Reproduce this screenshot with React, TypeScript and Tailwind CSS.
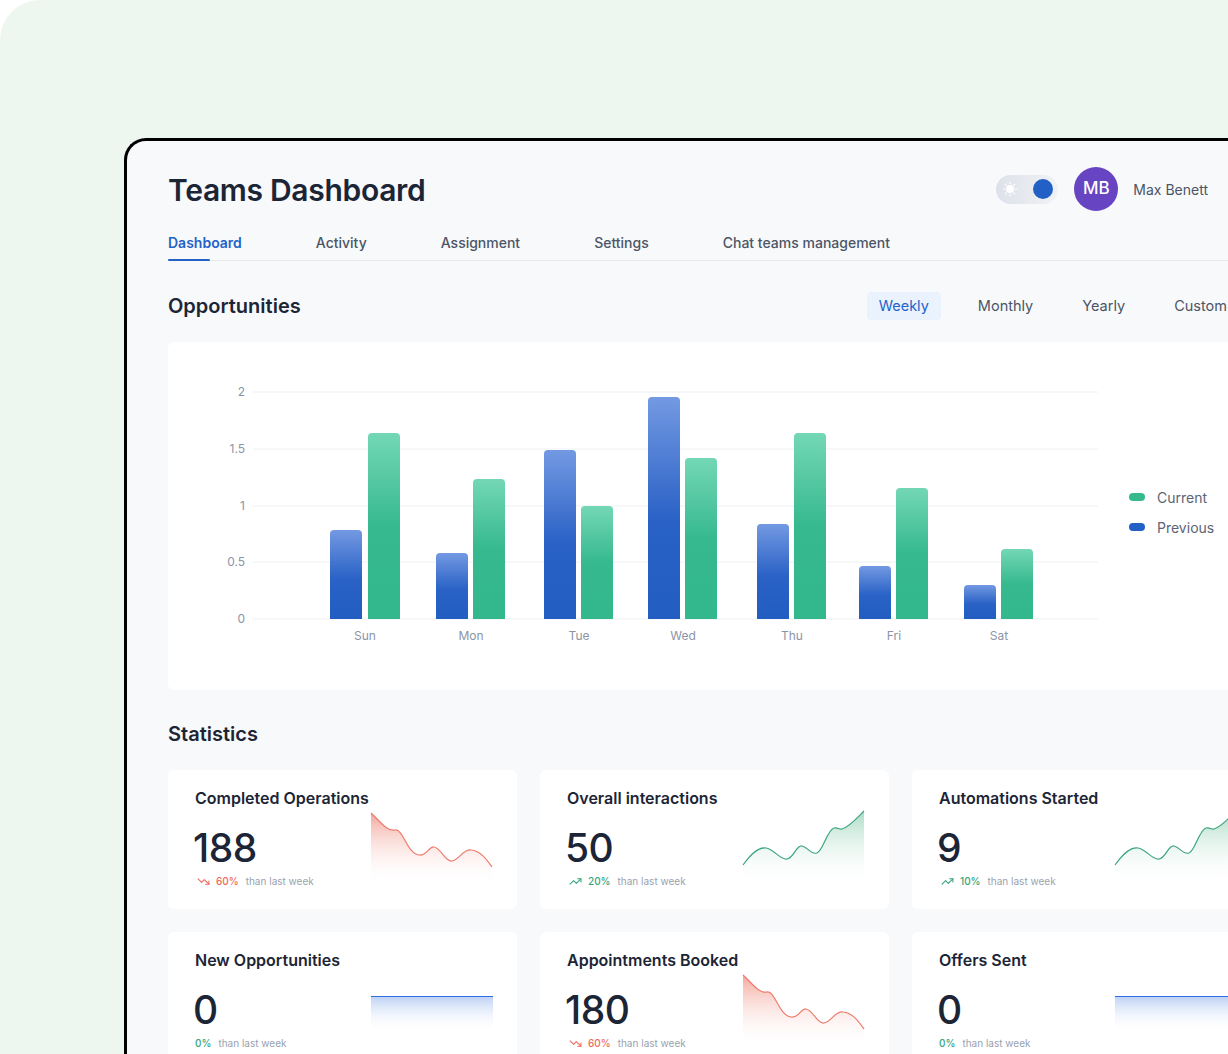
import React from "react";
import { TrendingDown, TrendingUp } from "lucide-react";

const barPath = (x: number, y: number, w: number, h: number, r: number) =>
  `M${x},${y + h} V${y + r} Q${x},${y} ${x + r},${y} H${x + w - r} Q${x + w},${y} ${x + w},${y + r} V${y + h} Z`;

const days = [
  { d: "Sun", px: 162, pt: 188, cx: 200, ct: 91 },
  { d: "Mon", px: 268, pt: 211, cx: 305, ct: 137 },
  { d: "Tue", px: 376, pt: 108, cx: 413, ct: 164 },
  { d: "Wed", px: 480, pt: 55, cx: 517, ct: 116 },
  { d: "Thu", px: 589, pt: 182, cx: 626, ct: 91 },
  { d: "Fri", px: 691, pt: 224, cx: 728, ct: 146 },
  { d: "Sat", px: 796, pt: 243, cx: 833, ct: 207 },
];

const BASE = 277;

function Chart() {
  const grid = [
    { y: 50, l: "2" },
    { y: 107, l: "1.5" },
    { y: 164, l: "1" },
    { y: 220, l: "0.5" },
    { y: 277, l: "0" },
  ];
  return (
    <svg width="961" height="348" viewBox="0 0 961 348" className="shrink-0">
      <defs>
        <linearGradient id="gPrev" x1="0" y1="0" x2="0" y2="1">
          <stop offset="0" stopColor="#7399e2" />
          <stop offset="0.55" stopColor="#2a62c6" />
          <stop offset="1" stopColor="#225dc2" />
        </linearGradient>
        <linearGradient id="gCur" x1="0" y1="0" x2="0" y2="1">
          <stop offset="0" stopColor="#74d7b5" />
          <stop offset="0.5" stopColor="#36b98f" />
          <stop offset="1" stopColor="#33b78c" />
        </linearGradient>
      </defs>
      {grid.map((g) => (
        <g key={g.l}>
          <line x1="85" x2="930" y1={g.y} y2={g.y} stroke="#eef0f3" strokeWidth="1" />
          <text x="77" y={g.y + 4} textAnchor="end" fontSize="12" fill="#8b94a5" fontFamily="Inter, sans-serif">
            {g.l}
          </text>
        </g>
      ))}
      {days.map((d) => (
        <g key={d.d}>
          <path d={barPath(d.px, d.pt, 32, BASE - d.pt, 4)} fill="url(#gPrev)" />
          <path d={barPath(d.cx, d.ct, 32, BASE - d.ct, 4)} fill="url(#gCur)" />
          <text x={d.px + 35} y="298" textAnchor="middle" fontSize="12" fill="#8b94a5" fontFamily="Inter, sans-serif">
            {d.d}
          </text>
        </g>
      ))}
    </svg>
  );
}

const redPath =
  "M0,3 C8,10 16,22 24,20 C32,18 36,44 48,45 C56,46 58,36 63,37 C70,38 74,52 81,51 C88,50 92,39 100,40 C110,41 116,50 121,57";
const greenPath =
  "M0,55 C8,44 15,37 23,38 C31,39 37,50 44,49 C51,48 53,35 59,36 C65,37 68,45 74,43 C80,41 84,20 91,18 C95,17 96,20 99,19 C106,17 114,8 121,1";

function Spark({ kind, id }: { kind: "red" | "green" | "blue"; id: string }) {
  if (kind === "blue") {
    return (
      <svg width="122" height="75" viewBox="0 0 122 75" className="shrink-0 overflow-visible">
        <defs>
          <linearGradient id={id} x1="0" y1="0" x2="0" y2="1">
            <stop offset="0" stopColor="#b8cdf3" stopOpacity="0.95" />
            <stop offset="1" stopColor="#ffffff" stopOpacity="0" />
          </linearGradient>
        </defs>
        <rect x="0" y="24" width="122" height="36" fill={`url(#${id})`} />
        <line x1="0" x2="122" y1="24.5" y2="24.5" stroke="#2f6fe4" strokeWidth="1.2" />
      </svg>
    );
  }
  const p = kind === "red" ? redPath : greenPath;
  const line = kind === "red" ? "#ee7a6a" : "#3ba580";
  const fill = kind === "red" ? "#f2a397" : "#a9d9c3";
  return (
    <svg width="122" height="75" viewBox="0 0 122 75" className="shrink-0 overflow-visible">
      <defs>
        <linearGradient id={id} x1="0" y1="0" x2="0" y2="1">
          <stop offset="0" stopColor={fill} stopOpacity="0.95" />
          <stop offset="1" stopColor="#ffffff" stopOpacity="0" />
        </linearGradient>
      </defs>
      <path d={`${p} L121,75 L0,75 Z`} fill={`url(#${id})`} />
      <path d={p} fill="none" stroke={line} strokeWidth="1.2" />
    </svg>
  );
}

type Stat = {
  title: string;
  value: string;
  pct: string;
  dir: "up" | "down" | "none";
  spark: "red" | "green" | "blue";
};

const stats: Stat[] = [
  { title: "Completed Operations", value: "188", pct: "60%", dir: "down", spark: "red" },
  { title: "Overall interactions", value: "50", pct: "20%", dir: "up", spark: "green" },
  { title: "Automations Started", value: "9", pct: "10%", dir: "up", spark: "green" },
  { title: "New Opportunities", value: "0", pct: "0%", dir: "none", spark: "blue" },
  { title: "Appointments Booked", value: "180", pct: "60%", dir: "down", spark: "red" },
  { title: "Offers Sent", value: "0", pct: "0%", dir: "none", spark: "blue" },
];

function StatCard({ s, i }: { s: Stat; i: number }) {
  const color = s.dir === "down" ? "text-[#ef6b5b]" : "text-[#36a57e]";
  return (
    <div className="h-[139px] bg-white rounded-[6px] pl-[27px] pr-[24px] pt-[16px] flex justify-between">
      <div className="flex flex-col">
        <div className="text-[16px] leading-[24px] font-semibold text-[#1c2536] whitespace-nowrap">{s.title}</div>
        <div className="mt-[18px] text-[39px] leading-[40px] font-medium text-[#1c2536] -ml-[2px] tracking-[-0.5px]">
          {s.value}
        </div>
        <div className="mt-[6px] flex items-center h-[14px] text-[10px] leading-[14px]">
          {s.dir === "down" && <TrendingDown size={13} strokeWidth={2} className="text-[#ef6b5b] ml-[2px] mr-[6px]" />}
          {s.dir === "up" && <TrendingUp size={13} strokeWidth={2} className="text-[#36a57e] ml-[2px] mr-[6px]" />}
          <span className={`${color} font-medium`}>{s.pct}</span>
          <span className="ml-[7px] text-[#9aa2b1]">than last week</span>
        </div>
      </div>
      <div className="pt-[24px]">
        <Spark kind={s.spark} id={`sp${i}`} />
      </div>
    </div>
  );
}

export default function App() {
  const tabs = ["Dashboard", "Activity", "Assignment", "Settings", "Chat teams management"];
  return (
    <div className="w-[1228px] h-[1054px] bg-white overflow-hidden font-['Inter',sans-serif]">
      <div className="w-full h-full bg-[#eef7ef] rounded-tl-[40px] pt-[138px] pl-[124px]">
        <div className="w-[1200px] h-[1000px] bg-[#f8f9fb] border-l-[3px] border-t-[3px] border-black rounded-tl-[22px] pl-[41px] pt-[26px]">
          <div className="w-[1093px]">
            {/* header */}
            <div className="h-[44px] flex items-center justify-between">
              <h1 className="text-[30px] leading-[40px] font-semibold text-[#1c2536] tracking-[-0.3px] mt-[2px]">
                Teams Dashboard
              </h1>
              <div className="flex items-center mr-[53px]">
                <div className="w-[62px] h-[29px] rounded-full bg-gradient-to-r from-[#dde1e9] to-[#f1f2f6] flex items-center justify-between px-[5px]">
                  <svg width="16" height="16" viewBox="0 0 16 16" className="ml-[1px]">
                    <circle cx="8" cy="8" r="4" fill="#ffffff" />
                    {[0, 45, 90, 135, 180, 225, 270, 315].map((a) => (
                      <line
                        key={a}
                        x1="8"
                        y1="1.3"
                        x2="8"
                        y2="2.4"
                        stroke="#ffffff"
                        strokeWidth="1.2"
                        strokeLinecap="round"
                        transform={`rotate(${a} 8 8)`}
                      />
                    ))}
                  </svg>
                  <div className="w-[20px] h-[20px] rounded-full bg-[#2360c6]" />
                </div>
                <div className="ml-[16px] w-[44px] h-[44px] rounded-full bg-[#6744c1] flex items-center justify-center text-white text-[17px] font-medium">
                  MB
                </div>
                <div className="ml-[15px] text-[14px] text-[#4b5566]">Max Benett</div>
              </div>
            </div>

            {/* tabs */}
            <div className="mt-[22px] flex gap-[74px] border-b border-[#e6e8ec]">
              {tabs.map((t, i) => (
                <div key={t} className="flex flex-col -mb-px">
                  <div
                    className={`text-[14px] leading-[20px] ${
                      i === 0 ? "text-[#2462c8] font-semibold" : "text-[#4b5566] font-medium"
                    }`}
                  >
                    {t}
                  </div>
                  <div className={`mt-[6px] h-[2px] w-[42px] rounded-full ${i === 0 ? "bg-[#2462c8]" : "bg-transparent"}`} />
                </div>
              ))}
            </div>

            {/* opportunities */}
            <div className="mt-[31px] h-[28px] flex items-center justify-between">
              <h2 className="text-[20px] leading-[28px] font-semibold text-[#1c2536]">Opportunities</h2>
              <div className="flex items-center gap-[25px] mr-[22px]">
                <div className="h-[28px] px-[12px] rounded-[4px] bg-[#eaf2fe] text-[#2462c8] text-[14.5px] flex items-center">
                  Weekly
                </div>
                <div className="h-[28px] px-[12px] text-[#4b5566] text-[14.5px] flex items-center">Monthly</div>
                <div className="h-[28px] px-[12px] text-[#4b5566] text-[14.5px] flex items-center">Yearly</div>
                <div className="h-[28px] px-[12px] text-[#4b5566] text-[14.5px] flex items-center">Custom</div>
              </div>
            </div>

            {/* chart */}
            <div className="mt-[22px] h-[348px] bg-white rounded-[6px] flex">
              <Chart />
              <div className="self-center flex flex-col gap-[10px] mb-[8px]">
                <div className="flex items-center h-[20px]">
                  <span className="w-[16px] h-[8px] rounded-full bg-[#36b98f]" />
                  <span className="ml-[12px] text-[14px] text-[#5b6475]">Current</span>
                </div>
                <div className="flex items-center h-[20px]">
                  <span className="w-[16px] h-[8px] rounded-full bg-[#2360c6]" />
                  <span className="ml-[12px] text-[14px] text-[#5b6475]">Previous</span>
                </div>
              </div>
            </div>

            {/* statistics */}
            <h2 className="mt-[30px] text-[20px] leading-[28px] font-semibold text-[#1c2536]">Statistics</h2>
            <div className="mt-[22px] grid grid-cols-[349px_349px_349px] gap-[23px]">
              {stats.map((s, i) => (
                <StatCard key={s.title} s={s} i={i} />
              ))}
            </div>
          </div>
        </div>
      </div>
    </div>
  );
}
